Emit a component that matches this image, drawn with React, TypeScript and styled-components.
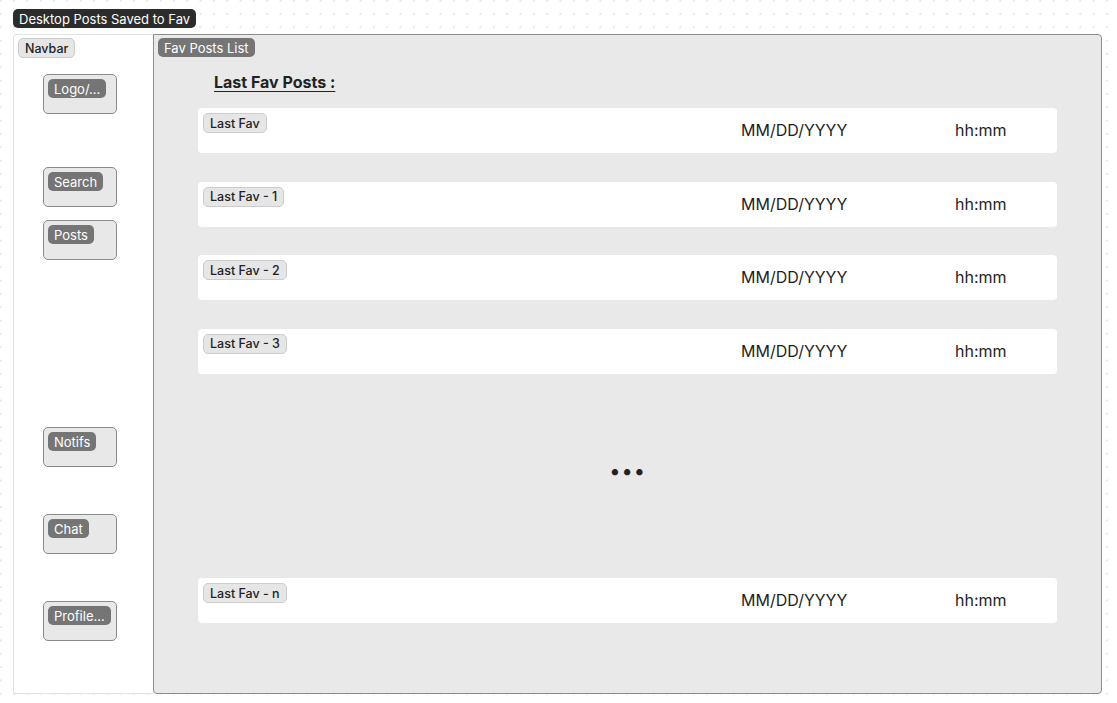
import React from 'react';
import styled, { createGlobalStyle } from 'styled-components';

const GlobalStyle = createGlobalStyle`
    html, body {
        margin: 0;
        padding: 0;
        background-color: #ffffff;
        background-image: radial-gradient(circle, #d9d9d9 0.6px, transparent 0.8px);
        background-size: 13.33px 13.33px;
        background-position: -6px -6px;
        font-family: Inter, "Noto Sans", sans-serif;
    }
`;

const favs = ['Last Fav', 'Last Fav - 1', 'Last Fav - 2', 'Last Fav - 3'];

const navItems = [
    { label: 'Logo/...', gap: 16 },
    { label: 'Search', gap: 53 },
    { label: 'Posts', gap: 13 },
    { label: 'Notifs', gap: 167 },
    { label: 'Chat', gap: 47 },
    { label: 'Profile...', gap: 47 },
];

const FavRow: React.FC<{ label: string }> = ({ label }) => (
    <Row>
        <LightTag>{label}</LightTag>
        <RowDate>MM/DD/YYYY</RowDate>
        <RowTime>hh:mm</RowTime>
    </Row>
);

const App: React.FC = () => {
    return (
        <Page>
            <GlobalStyle />
            <PageTitle>Desktop Posts Saved to Fav</PageTitle>
            <Frames>
                <Navbar>
                    <LightTag>Navbar</LightTag>
                    {navItems.map((item) => (
                        <NavButton key={item.label} $gap={item.gap}>
                            <DarkTag>{item.label}</DarkTag>
                        </NavButton>
                    ))}
                </Navbar>
                <Main>
                    <DarkTag>Fav Posts List</DarkTag>
                    <Heading>Last Fav Posts :</Heading>
                    <List>
                        {favs.map((f) => (
                            <FavRow key={f} label={f} />
                        ))}
                    </List>
                    <Dots>•••</Dots>
                    <FavRow label="Last Fav - n" />
                </Main>
            </Frames>
        </Page>
    );
};

export default App;

const Page = styled.div`
    width: 1117px;
    height: 703px;
    padding: 9px 0 0 13px;
    box-sizing: border-box;
    display: flex;
    flex-direction: column;
    align-items: flex-start;
`;

const PageTitle = styled.div`
    display: flex;
    align-items: center;
    height: 19px;
    padding: 0 6px;
    background: #2c2c2c;
    color: #ffffff;
    font-size: 13px;
    border-radius: 5px;
`;

const Frames = styled.div`
    display: flex;
    align-self: stretch;
    margin-top: 6px;
    height: 660px;
`;

const Navbar = styled.div`
    width: 140px;
    box-sizing: border-box;
    background: #ffffff;
    border: 1px solid #e2e2e2;
    border-right: none;
    border-radius: 4px 0 0 4px;
    padding: 3px 0 0 4px;
    display: flex;
    flex-direction: column;
    align-items: flex-start;
`;

const LightTag = styled.div`
    display: flex;
    align-items: center;
    height: 18px;
    padding: 0 6px;
    background: #e6e6e6;
    border: 1px solid #cccccc;
    border-radius: 5px;
    color: #222222;
    font-size: 12.5px;
    font-weight: 500;
`;

const DarkTag = styled.div`
    display: flex;
    align-self: flex-start;
    align-items: center;
    height: 19px;
    padding: 0 6px;
    background: #757575;
    border-radius: 5px;
    color: #ffffff;
    font-size: 13px;
`;

const NavButton = styled.div<{ $gap: number }>`
    margin-top: ${({ $gap }) => $gap}px;
    margin-left: 25px;
    width: 74px;
    height: 40px;
    box-sizing: border-box;
    border: 1px solid #8a8a8a;
    border-radius: 5px;
    background: #e8e8e8;
    padding: 4px 0 0 4px;
    display: flex;
    flex-direction: column;
`;

const Main = styled.div`
    flex: 1;
    margin-right: 15px;
    box-sizing: border-box;
    background: #e9e9e9;
    border: 1px solid #8c8c8c;
    border-radius: 0 4px 4px 4px;
    padding: 3px 44px 0 4px;
    display: flex;
    flex-direction: column;
`;

const Heading = styled.div`
    margin: 15px 0 0 56px;
    font-size: 16px;
    font-weight: 700;
    color: #222222;
    text-decoration: underline;
    text-underline-offset: 3px;
    line-height: 20px;
`;

const List = styled.div`
    display: flex;
    flex-direction: column;
    gap: 28.5px;
    margin-top: 16px;
`;

const Row = styled.div`
    margin-left: 40px;
    height: 45px;
    box-sizing: border-box;
    background: #ffffff;
    border-radius: 4px;
    display: flex;
    align-items: flex-start;
    padding: 5px 0 0 5px;
    position: relative;
`;

const RowDate = styled.div`
    position: absolute;
    left: 543px;
    top: 12px;
    font-size: 16px;
    color: #1e1e1e;
    line-height: 20px;
`;

const RowTime = styled.div`
    position: absolute;
    left: 757px;
    top: 12px;
    font-size: 16px;
    color: #1e1e1e;
    line-height: 20px;
`;

const Dots = styled.div`
    height: 204.5px;
    box-sizing: border-box;
    padding: 0 0 10px 40px;
    display: flex;
    align-items: center;
    justify-content: center;
    font-size: 20px;
    letter-spacing: 1px;
    color: #222222;
    line-height: 1;
`;
